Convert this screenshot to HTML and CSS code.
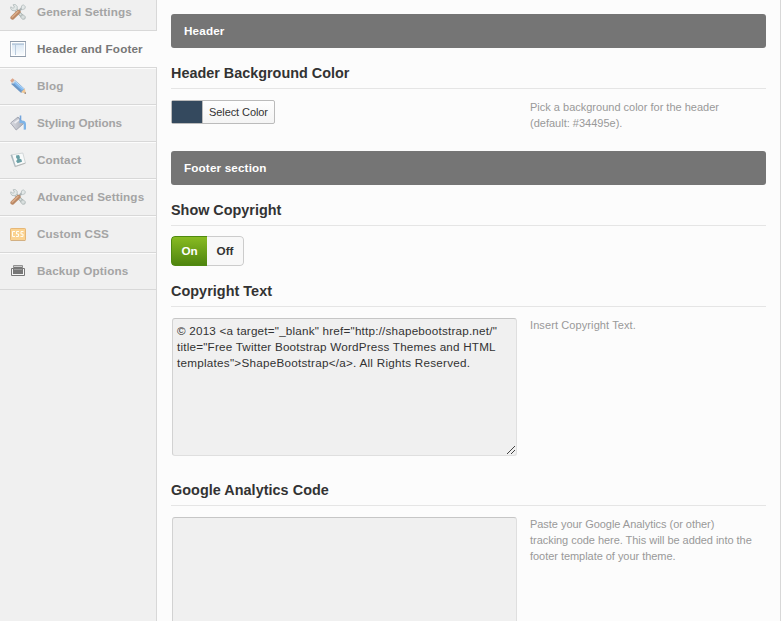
FILE: index.html
```html
<!DOCTYPE html>
<html lang="en">
<head>
<meta charset="utf-8">
<title>Theme Options</title>
<link rel="stylesheet" href="styles.css">
</head>
<body>
<svg class="defs" width="0" height="0">
  <defs>
    <symbol id="tools" viewBox="0 0 16 16">
      <path d="M12.5 3.5L7 9" stroke="#a9b1b3" stroke-width="2.2"/>
      <path d="M13.2.8l2.2 1.8-.6 2.2-2.2.8-1.4-1.4.4-2.4z" fill="#e3e8e8" stroke="#b4bdbe" stroke-width=".8"/>
      <path d="M4 4l8.5 8.5" stroke="#a9b3b2" stroke-width="3.2"/>
      <path d="M4 4l8.5 8.5" stroke="#dde3e2" stroke-width="1.6"/>
      <path d="M3 .8L5.4.5l1.8 2v2.6L5 6.8l-3-.4L.6 4.2.8 2.8 3 4.3l1.5-1.2z" fill="#e3e8e7" stroke="#b0baba" stroke-width=".8"/>
      <path d="M11 11.2l2.4-.3 2 2-.6 2.1-2.3.3-1.6-2z" fill="#d9dfde" stroke="#a8b3b2" stroke-width=".8"/>
      <path d="M8.6 7.8L2.4 13.7" stroke="#bb8965" stroke-width="4" stroke-linecap="round"/>
      <path d="M8 7.5L2.2 13" stroke="#dcae8c" stroke-width="1.4" stroke-linecap="round"/>
    </symbol>
    <linearGradient id="pane" x1="0" y1="0" x2="0" y2="1">
      <stop offset="0" stop-color="#dde9f5"/><stop offset="1" stop-color="#f8fbfd"/>
    </linearGradient>
    <linearGradient id="metal" x1="0" y1="0" x2="1" y2="0">
      <stop offset="0" stop-color="#dcdde3"/><stop offset="1" stop-color="#a9adb8"/>
    </linearGradient>
  </defs>
</svg>
<div class="panel">
  <ul class="nav">
    <li class="item"><svg class="icon" viewBox="0 0 16 16"><use href="#tools"/></svg>General Settings</li>
    <li class="item current"><svg class="icon" viewBox="0 0 16 16"><path d="M.5.5h15v15H.5z" fill="#fff" stroke="#a9b3c0"/><path d="M0 .5h16M0 15.5h16" stroke="#8f9baa"/><path d="M2 2h12v1.2H2z" fill="#c9d7e5"/><path d="M2 4h3v10H2zM6 4h8v10H6z" fill="url(#pane)"/><path d="M5.5 3v11M2 3.5h12" stroke="#b8cadd"/></svg>Header and Footer</li>
    <li class="item"><svg class="icon" viewBox="0 0 16 16"><path d="M3 4l10 9" stroke="#6c97c6" stroke-width="5.4"/><path d="M4 3.8l9 8" stroke="#83baf0" stroke-width="2.6"/><path d="M4.6 3L14 11.2" stroke="#c1e0fa" stroke-width="1"/><path d="M.2 2.5L2.5.3l2.2 1.8L2 5z" fill="#dda78c"/><path d="M2 5l2.8-2.9 1 1L3 6z" fill="#d6dadf"/><path d="M11 14.2l3.8-3.7 1.1 5.1z" fill="#efc796"/><path d="M14.1 15.2l1.4-1.3.5 2z" fill="#80706b"/></svg>Blog</li>
    <li class="item tight"><svg class="icon" viewBox="0 0 16 16"><path d="M.6 8L8 2l5.8 6.4L6.2 15z" fill="url(#metal)" stroke="#9ea2ad" stroke-width=".9"/><path d="M4 7.6l4.4-3.5 1 1.1-4.3 3.6z" fill="#eeeef2"/><path d="M10.5.5V6" stroke="#73a5dc" stroke-width="1.6"/><path d="M9.5 5.8c3-.8 6.5-.4 6.5 3.3v5.4l-2.3.3V9.5c-.5-1.7-2.2-1.7-4.2-1.5z" fill="#7eb4e7"/></svg>Styling Options</li>
    <li class="item"><svg class="icon" viewBox="0 0 16 16"><path d="M1 3l11.8-2 2.7 10.2L5 14.8z" fill="#f8fafa" stroke="#c9cfd1" stroke-width=".8"/><path d="M.6 3l1.6-.2L5.8 14l-.9.8z" fill="#abb9bf"/><path d="M5.3 14.4l10-3.3" stroke="#aaa" stroke-width=".8"/><path d="M6 3.6l3-.6 1 2.3-.6 1.3 2.1 1 .5 2.2-4.4 1.4-1.5-2 1.4-2.2-1.3-1z" fill="#699fa5"/></svg>Contact</li>
    <li class="item"><svg class="icon" viewBox="0 0 16 16"><use href="#tools"/></svg>Advanced Settings</li>
    <li class="item"><svg class="icon" viewBox="0 0 16 16"><rect x=".5" y="2.5" width="15" height="12" rx=".7" fill="#fbd391" stroke="#e6b777"/><path d="M1 14.5h14" stroke="#d2b083"/><path d="M5 5.5H2.5v5H5M9 5.5H6.5v2.5h2v2.5H6M13.5 5.5H11v2.5h2v2.5h-2.5" fill="none" stroke="#fffdf3"/></svg>Custom CSS</li>
    <li class="item"><svg class="icon" viewBox="0 0 16 16"><path d="M3.5 5V2.5h9V5" fill="#ccc" stroke="#929292"/><path d="M4 4.5h8" stroke="#777"/><path d="M1.5 5.5h13v7h-13z" fill="#f5f5f5" stroke="#777"/><path d="M3 5h10v6H3z" fill="#777"/><path d="M4 6.5h8" stroke="#999"/></svg>Backup Options</li>
  </ul>
  <div class="content">
    <div class="bar">Header</div>
    <section class="option color">
      <h3>Header Background Color</h3>
      <div class="row">
        <div class="control"><div class="picker"><span class="swatch"></span><span class="pick">Select Color</span></div></div>
        <p class="help">Pick a background color for the header<br>(default: #34495e).</p>
      </div>
    </section>
    <div class="bar">Footer section</div>
    <section class="option toggle">
      <h3>Show Copyright</h3>
      <div class="row"><div class="switch"><span class="on">On</span><span class="off">Off</span></div></div>
    </section>
    <section class="option text">
      <h3>Copyright Text</h3>
      <div class="row">
        <div class="control"><div class="area">© 2013 &lt;a target="_blank" href="http://shapebootstrap.net/"<br>title="Free Twitter Bootstrap WordPress Themes and HTML<br><span class="wide">templates"&gt;ShapeBootstrap&lt;/a&gt;. All Rights Reserved.</span><svg class="grip" viewBox="0 0 8 8"><path d="M0 7h1v1H0zM1 6h1v1H1zM2 5h1v1H2zM3 4h1v1H3zM4 3h1v1H4zM5 2h1v1H5zM6 1h1v1H6zM7 0h1v1H7zM4 7h1v1H4zM5 6h1v1H5zM6 5h1v1H6zM7 4h1v1H7z" fill="#444"/></svg></div></div>
        <p class="help short">Insert Copyright Text.</p>
      </div>
    </section>
    <section class="option text">
      <h3>Google Analytics Code</h3>
      <div class="row">
        <div class="control"><div class="area"></div></div>
        <p class="help long">Paste your Google Analytics (or other)<br>tracking code here. This will be added into the<br>footer template of your theme.</p>
      </div>
    </section>
  </div>
</div>
</body>
</html>
```
FILE: styles.css
```css
* { box-sizing: border-box; }
html, body { margin: 0; height: 621px; overflow: hidden; }
body { background: #fff; font-family: "Liberation Sans", Arial, sans-serif; font-size: 11px; color: #333; }
.defs { display: block; height: 0; }
.panel { display: flex; width: 781px; height: 621px; overflow: hidden; background: #fcfcfc; border-right: 1px solid #d8d8d8; }
.nav { flex: none; width: 157px; margin: 0; padding: 0; list-style: none; background: #f0f0f0; box-shadow: inset -1px 0 #d8d8d8; }
.nav .item:first-child { margin-top: -6px; }
.item { display: flex; align-items: center; height: 37px; padding: 0 0 2px 10px; gap: 11px; margin-right: 1px; border-top: 1px solid #fcfcfc; border-bottom: 1px solid #d8d8d8; color: #a4a4a4; font-size: 11.7px; font-weight: bold; letter-spacing: .12px; white-space: nowrap; }
.item.tight { letter-spacing: -.1px; }
.item.current { margin-right: 0; background: #fcfcfc; color: #777; letter-spacing: .15px; }
.icon { flex: none; width: 16px; height: 16px; }
.content { width: 595px; margin-left: 14px; padding-top: 14px; }
.bar { height: 34px; padding-left: 13px; border-radius: 3px; background: #757575; color: #fff; font-size: 11.7px; font-weight: bold; letter-spacing: .15px; line-height: 34px; }
.option { overflow: hidden; }
.color { height: 103px; }
.toggle { height: 81px; }
.text { height: 199px; }
h3 { height: 41px; margin: 0; border-bottom: 1px solid #e5e5e5; font-size: 14.4px; line-height: 50px; color: #333; }
.text h3 { letter-spacing: .04px; }
.row { display: flex; }
.control { flex: none; width: 359px; }
.help { margin: 10px 0 0; color: #999; line-height: 16px; white-space: nowrap; }
.short { letter-spacing: .1px; }
.long { letter-spacing: -.04px; }
.picker { display: flex; width: 104px; height: 24px; margin-top: 11px; border: 1px solid #bbb; border-radius: 2px; background: linear-gradient(#fefefe, #f4f4f4); }
.swatch { width: 31px; background: #34495e; border-right: 1px solid #bbb; }
.pick { padding-left: 6px; letter-spacing: -.08px; line-height: 22px; white-space: nowrap; }
.switch { display: flex; width: 73px; height: 30px; margin-top: 10px; border-radius: 4px; overflow: hidden; font-size: 11.7px; font-weight: bold; text-align: center; }
.on { width: 36px; color: #fff; border: 1px solid #4f8a10; border-right: 0; border-radius: 4px 0 0 4px; background: linear-gradient(#88bb22, #4f850f); line-height: 28px; }
.off { width: 37px; border: 1px solid #ccc; border-left: 0; border-radius: 0 4px 4px 0; background: #f8f8f8; line-height: 28px; }
.area { position: relative; width: 345px; height: 138px; margin: 11px 0 0 1px; padding: 4px 4px; border: 1px solid #dfdfdf; border-top-color: #c6c6c6; border-left-color: #d2d2d2; border-radius: 3px; background: #f0f0f0; font-size: 11.7px; line-height: 16px; letter-spacing: .2px; white-space: nowrap; }
.wide { letter-spacing: .25px; }
.grip { position: absolute; right: 1px; bottom: 1px; width: 8px; height: 8px; }
```
